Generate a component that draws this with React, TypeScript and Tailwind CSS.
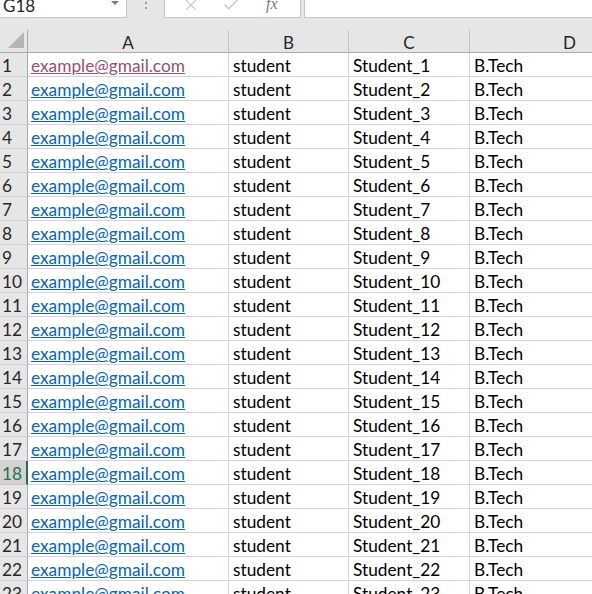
import { X, Check } from "lucide-react";

const rows = Array.from({ length: 23 }, (_, i) => i + 1);
const font = { fontFamily: "Lato, 'Liberation Sans', sans-serif" };

function Toolbar() {
  return (
    <div className="flex h-[30px] items-start bg-[#e6e6e6]">
      <div className="relative h-[18px] w-[127px] overflow-hidden border-b border-r border-[#c6c6c6] bg-white">
        <span className="absolute left-[3px] top-[-7px] text-[17px] text-[#262626]">G18</span>
        <span className="absolute right-[7px] top-[1px] h-0 w-0 border-x-[4px] border-t-[4px] border-x-transparent border-t-[#7a7a7a]" />
      </div>
      <div className="flex w-[37px] flex-col items-center gap-[3px] pt-[2px]">
        <span className="h-[2px] w-[2px] bg-[#a0a0a0]" />
        <span className="h-[2px] w-[2px] bg-[#a0a0a0]" />
      </div>
      <div className="flex h-[18px] w-[137px] items-center border-b border-l border-r border-[#c6c6c6] bg-white text-[#c8c8c8]">
        <X className="ml-[17px] mt-[-8px]" size={18} strokeWidth={1.5} />
        <Check className="ml-[22px] mt-[-8px]" size={18} strokeWidth={2} />
        <span className="ml-[26px] mt-[-10px] text-[16px] italic text-[#7a7a7a]" style={{ fontFamily: "'Liberation Serif', serif" }}>
          fx
        </span>
      </div>
      <div className="ml-[3px] h-[18px] flex-1 border-b border-l border-[#c6c6c6] bg-white" />
    </div>
  );
}

function HeaderRow() {
  const cols = [
    { l: "A", w: "w-[201px]" },
    { l: "B", w: "w-[120px]" },
    { l: "C", w: "w-[121px]" },
    { l: "D", w: "w-[200px]" },
  ];
  return (
    <div className="flex h-[23px] border-b border-[#ababab] bg-[#e6e6e6]">
      <div className="relative w-[28px] shrink-0 border-r border-[#ababab]">
        <span className="absolute bottom-[4px] right-[3px] h-0 w-0 border-b-[16px] border-l-[16px] border-b-[#b4b4b4] border-l-transparent" />
      </div>
      {cols.map((c) => (
        <div key={c.l} className={`${c.w} shrink-0 border-r border-[#c6c6c6] pt-[2px] text-center text-[17px] leading-[21px] text-[#262626]`}>
          {c.l}
        </div>
      ))}
    </div>
  );
}

function DataRow({ n }: { n: number }) {
  const selected = n === 18;
  const cell = "shrink-0 border-b border-r border-[#d4d4d4] bg-white pt-[2px]";
  return (
    <div className="flex h-[24px] text-[17.3px] leading-[21px]">
      <div
        className={
          selected
            ? "w-[28px] shrink-0 border-b border-r-2 border-b-[#c6c6c6] border-r-[#217346] bg-[#d2d2d2] pl-[2px] pt-[2px] text-[#217346]"
            : "w-[28px] shrink-0 border-b border-r border-b-[#d4d4d4] border-r-[#ababab] bg-[#e6e6e6] pl-[2px] pt-[2px] text-[#262626]"
        }
      >
        {n}
      </div>
      <div className={`w-[201px] pl-[3px] ${cell}`}>
        <span className={n === 1 ? "text-[#954f72] underline" : "text-[#0563c1] underline"}>example@gmail.com</span>
      </div>
      <div className={`w-[120px] pl-[4px] text-black ${cell}`}>student</div>
      <div className={`w-[121px] pl-[4px] text-black ${cell}`}>Student_{n}</div>
      <div className={`w-[200px] pl-[4px] text-black ${cell}`}>B.Tech</div>
    </div>
  );
}

export default function App() {
  return (
    <div className="h-[594px] w-[592px] overflow-hidden bg-white" style={font}>
      <Toolbar />
      <HeaderRow />
      {rows.map((n) => (
        <DataRow key={n} n={n} />
      ))}
    </div>
  );
}
